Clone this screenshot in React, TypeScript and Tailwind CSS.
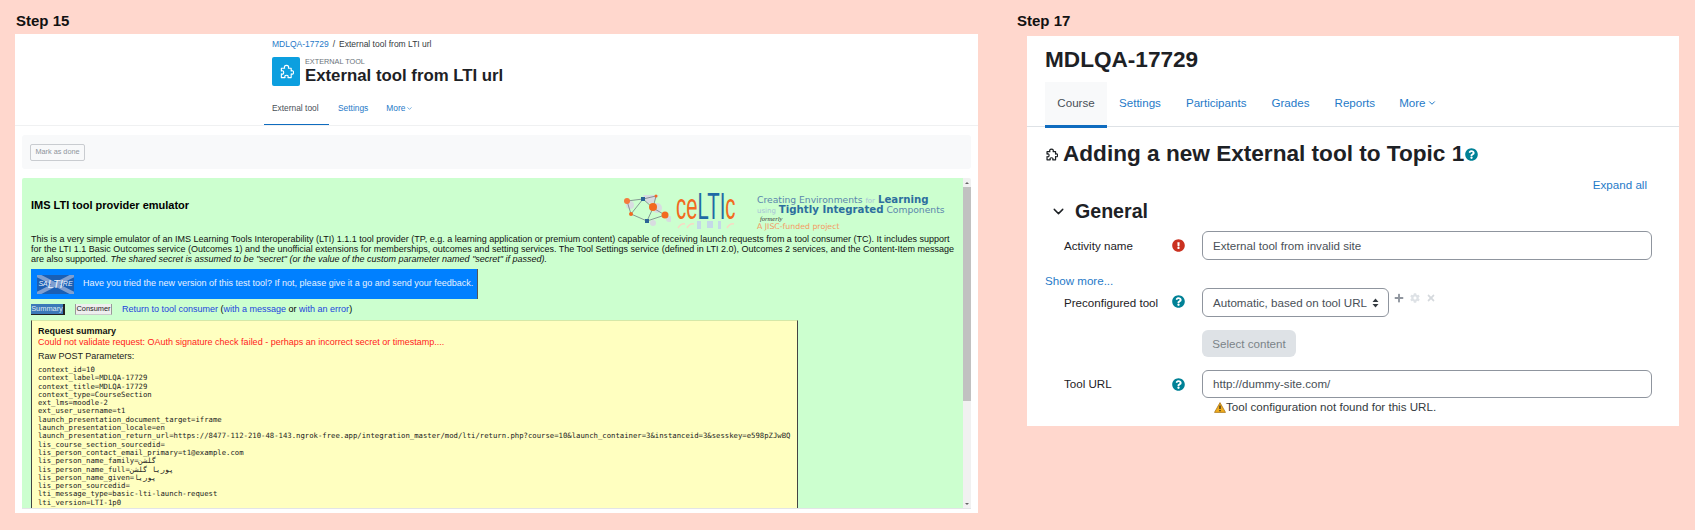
import { ChevronDown } from "lucide-react";
import { FaCog, FaExclamationCircle, FaPlus, FaQuestionCircle, FaTimes } from "react-icons/fa";

const sans = { fontFamily: '"Liberation Sans", Arial, sans-serif' };

const rawParams = [
  "context_id=10",
  "context_label=MDLQA-17729",
  "context_title=MDLQA-17729",
  "context_type=CourseSection",
  "ext_lms=moodle-2",
  "ext_user_username=t1",
  "launch_presentation_document_target=iframe",
  "launch_presentation_locale=en",
  "launch_presentation_return_url=https://8477-112-210-48-143.ngrok-free.app/integration_master/mod/lti/return.php?course=10&launch_container=3&instanceid=3&sesskey=e598pZJwBQ",
  "lis_course_section_sourcedid=",
  "lis_person_contact_email_primary=t1@example.com",
  "lis_person_name_family=گلشن",
  "lis_person_name_full=پوریا گلشن",
  "lis_person_name_given=پوریا",
  "lis_person_sourcedid=",
  "lti_message_type=basic-lti-launch-request",
  "lti_version=LTI-1p0",
];

// moodle's outlined puzzle piece
function PuzzleIcon({ size, color, width }: { size: number; color: string; width: number }) {
  return (
    <svg width={size} height={size} viewBox="0 0 16 16" fill="none" stroke={color} strokeWidth={width} strokeLinejoin="round" className="shrink-0">
      <path d="M2.5 4.5 H6 Q5 1.5 8 1.5 Q11 1.5 10 4.5 H13 V7.5 Q15.5 6.5 15.5 9 Q15.5 11.5 13 10.5 V14.5 H9.5 Q10.5 12 8 12 Q5.5 12 6.5 14.5 H2.5 V10.5 Q5 11.5 5 9 Q5 6.5 2.5 7.5 Z" />
    </svg>
  );
}

function CelticLogo() {
  return (
    <div className="flex items-start shrink-0 mt-[15px]">
      <svg width="48" height="34" viewBox="0 0 48 34" className="shrink-0">
        <g fill="#d8dce0">
          <circle cx="7" cy="12" r="4" />
          <circle cx="34" cy="15" r="5" />
          <circle cx="46" cy="26" r="3" />
          <circle cx="30" cy="30" r="3" />
          <path d="M20 2 H36 L30 10 H24 Z" />
        </g>
        <g stroke="#666f78" strokeWidth="0.7" fill="none">
          <path d="M4 8 L20 6 L30 15 L42 22 L24 28 L8 21 Z" />
          <path d="M20 6 L8 21 M30 15 L24 28 M20 6 L33 3 L30 15" />
        </g>
        <circle cx="4" cy="8" r="3" fill="#f47b3c" />
        <circle cx="30" cy="14" r="4" fill="#f26a21" />
        <circle cx="42" cy="22" r="3.5" fill="#f26a21" />
        <circle cx="8" cy="21" r="2" fill="#f26a21" />
        <rect x="18" y="4" width="4" height="4" fill="#2a6496" />
        <rect x="22" y="26" width="4" height="4" fill="#2a6496" />
        <circle cx="33" cy="3" r="1.5" fill="#f26a21" />
      </svg>
      <div className="ml-[5px] w-[61px]">
        <div className="h-[28px] text-[36px] leading-[28px] whitespace-nowrap scale-x-[0.565] origin-left">
          <span className="text-[#f26a21]">ce</span>
          <span className="text-[#1f6aa5]">LTI</span>
          <span className="text-[#f26a21]">c</span>
        </div>
        <svg width="61" height="9" viewBox="0 0 61 9">
          <path d="M2 7 Q5 2 9 3 M11 7 Q14 2 18 3 M51 7 Q54 2 58 3" stroke="#f8d9c4" strokeWidth="1.5" fill="none" />
          <path d="M21 0 H25 V8 H21 Z M31 0 H37 V7 H31 Z M42 0 H45 V8 H42 Z" fill="#c4d8e8" />
        </svg>
      </div>
    </div>
  );
}

function LeftPanel() {
  return (
    <div className="flex flex-col w-[963px] h-[479px] bg-white overflow-hidden">
      <div className="pl-[249px] pt-[4px]">
        <div className="pl-[8px] h-[12px] text-[8.5px] leading-[12px] text-[#343a40] whitespace-nowrap">
          <span className="text-[#1f7ac8]">MDLQA-17729</span>
          <span className="mx-[4px]">/</span>
          <span>External tool from LTI url</span>
        </div>
        <div className="flex items-center pl-[8px] mt-[6px]">
          <div className="flex items-center justify-center w-[28px] h-[29px] rounded-[2px] bg-[#0c9fdf]">
            <PuzzleIcon size={15} color="#ffffff" width={1.2} />
          </div>
          <div className="ml-[5px] pt-px">
            <div className="text-[7.3px] leading-[9px] text-[#6a737b]">EXTERNAL TOOL</div>
            <div className="text-[16.8px] leading-[20px] font-bold text-[#1d2125] whitespace-nowrap">External tool from LTI url</div>
          </div>
        </div>
        <div className="flex mt-[9px] h-[31px] text-[8.4px] whitespace-nowrap w-fit">
          <div className="flex items-center w-[65px] pl-[8px] pb-[3px] h-[31px] border-b-[2px] border-[#0f6cbf] text-[#495057]">External tool</div>
          <div className="flex items-center ml-[9px] pb-[4px] text-[#1f7ac8]">Settings</div>
          <div className="flex items-center ml-[18px] pb-[4px] text-[#1f7ac8]">
            More
            <ChevronDown size={7} className="ml-[1px]" />
          </div>
        </div>
      </div>
      <div className="h-px bg-[#f0f1f2] -mt-px" />
      <div className="mx-[7px] mt-[9px] h-[34px] flex items-center px-[8px] rounded-[3px] bg-[#f8f9fa]">
        <div className="flex items-center justify-center w-[55px] h-[17px] border border-[#c9ccd0] rounded-[2px] text-[7.3px] text-[#8f959b] whitespace-nowrap">Mark as done</div>
      </div>
      <div className="mx-[7px] mt-[9px] h-[331px] flex overflow-hidden rounded-t-[2px] border-b border-[#e3e5e7]">
        <div className="flex-1 min-w-0 bg-[#ccffcf] overflow-hidden text-black">
          <div className="flex justify-between h-[56px] pl-[9px]">
            <div className="mt-[20px] text-[11px] leading-[14px] font-bold whitespace-nowrap">IMS LTI tool provider emulator</div>
            <div className="flex w-[325px] mr-[15px]">
              <CelticLogo />
              <div className="ml-[20px] mt-[17px] whitespace-nowrap text-[#5b86ad]" style={{ fontFamily: '"DejaVu Sans", sans-serif' }}>
                <div className="h-[10px] text-[9.2px] leading-[10px]">
                  Creating Environments <span className="text-[7px] text-[#a8c4d8]">for</span>{" "}
                  <span className="font-bold text-[10.2px] text-[#2c6e9e]">Learning</span>
                </div>
                <div className="h-[10px] text-[9.2px] leading-[10px]">
                  <span className="text-[7px] text-[#a8c4d8]">using</span>{" "}
                  <span className="font-bold text-[10.2px] text-[#2c6e9e]">Tightly Integrated</span> Components
                </div>
                <div className="pl-[3px] h-[7px] text-[6.5px] italic leading-[7px] text-[#333]" style={{ fontFamily: '"Liberation Serif", serif' }}>formerly</div>
                <div className="text-[7.8px] leading-[10px] text-[#f59a62]">A JISC-funded project</div>
              </div>
            </div>
          </div>
          <div className="pl-[9px] text-[9px] leading-[10px] whitespace-nowrap text-[#111]">
            This is a very simple emulator of an IMS Learning Tools Interoperability (LTI) 1.1.1 tool provider (TP, e.g. a learning application or premium content) capable of receiving launch requests from a tool consumer (TC). It includes support
            <br />
            for the LTI 1.1 Basic Outcomes service (Outcomes 1) and the unofficial extensions for memberships, outcomes and setting services. The Tool Settings service (defined in LTI 2.0), Outcomes 2 services, and the Content-Item message
            <br />
            are also supported. <em>The shared secret is assumed to be "secret" (or the value of the custom parameter named "secret" if passed).</em>
          </div>
          <div className="flex items-center ml-[9px] mt-[5px] w-[447px] h-[30px] pl-[6px] bg-[#0080ff] border-r border-[#555]">
            <div className="relative shrink-0 w-[37px] h-[19px]">
              <svg width="37" height="19" viewBox="0 0 37 19">
                <rect width="37" height="19" fill="#1a5fb4" />
                <path d="M0 0 L37 19 M37 0 L0 19" stroke="#7f9fd0" strokeWidth="4" />
              </svg>
              <span className="absolute inset-0 flex items-center justify-center italic text-[#e9f1fb] whitespace-nowrap">
                <span className="text-[7px]">SA</span>
                <span className="text-[11px]">LTI</span>
                <span className="text-[7px]">RE</span>
              </span>
            </div>
            <span className="ml-[9px] text-[9px] text-[#e8f2ff] whitespace-nowrap">Have you tried the new version of this test tool? If not, please give it a go and send your feedback.</span>
          </div>
          <div className="flex items-center ml-[9px] mt-[5px] h-[11px] text-[9px] whitespace-nowrap">
            <div className="flex items-center justify-center w-[34px] h-[11px] bg-[#3b78b8] border-r-2 border-b border-[#222] text-[7.4px] text-[#dfe9f4]">Summary</div>
            <div className="flex items-center justify-center ml-[10px] w-[37px] h-[11px] bg-[#eeeeee] border-x border-b border-x-[#999] border-b-[#ccc] text-[7.4px] text-[#222]">Consumer</div>
            <div className="ml-[10px]">
              <span className="text-[#2244dd]">Return to tool consumer</span> (<span className="text-[#2244dd]">with a message</span> or <span className="text-[#2244dd]">with an error</span>)
            </div>
          </div>
          <div className="ml-[9px] mt-[5px] w-[767px] h-[300px] bg-[#ffffc0] border-x border-[#444] border-t border-t-[#d5e8a8] pl-[6px] pt-[5px]">
            <div className="text-[9px] leading-[11px] font-bold text-[#111]">Request summary</div>
            <div className="text-[9px] leading-[11px] text-[#ff1a1a] whitespace-nowrap">Could not validate request: OAuth signature check failed - perhaps an incorrect secret or timestamp....</div>
            <div className="mt-[3px] text-[9px] leading-[11px] text-[#222]">Raw POST Parameters:</div>
            <div className="mt-[4px] text-[7.28px] leading-[8.3px] text-[#222] whitespace-nowrap" style={{ fontFamily: '"DejaVu Sans Mono", monospace' }}>
              {rawParams.map((line) => (
                <div key={line} className="h-[8.3px]">{line}</div>
              ))}
            </div>
          </div>
        </div>
        <div className="flex flex-col shrink-0 w-[8px] bg-[#f1f1f1]">
          <div className="flex items-center justify-center h-[9px]">
            <div className="w-0 h-0 border-x-[2px] border-x-transparent border-b-[2px] border-b-[#666]" />
          </div>
          <div className="h-[214px] bg-[#c1c1c1]" />
          <div className="flex-1" />
          <div className="flex items-center justify-center h-[9px]">
            <div className="w-0 h-0 border-x-[2px] border-x-transparent border-t-[2px] border-t-[#666]" />
          </div>
        </div>
      </div>
    </div>
  );
}

function RightPanel() {
  const helpIcon = <FaQuestionCircle size={13} color="#008196" />;
  return (
    <div className="w-[652px] h-[390px] bg-white text-[#1d2125] overflow-hidden">
      <div className="pl-[18px] pt-[8px] text-[22.6px] leading-[32px] font-bold whitespace-nowrap">MDLQA-17729</div>
      <div className="flex pl-[18px] mt-[6px] h-[45px] border-b border-[#dee2e6] text-[11.6px] whitespace-nowrap">
        <div className="flex items-center justify-center w-[62px] h-[46px] pb-[2px] bg-[#f8f9fa] border-b-[3px] border-[#0f6cbf] text-[#495057]">Course</div>
        <div className="flex items-center ml-[12px] pb-[2px] text-[#1f7ac8]">Settings</div>
        <div className="flex items-center ml-[25px] pb-[2px] text-[#1f7ac8]">Participants</div>
        <div className="flex items-center ml-[25px] pb-[2px] text-[#1f7ac8]">Grades</div>
        <div className="flex items-center ml-[25px] pb-[2px] text-[#1f7ac8]">Reports</div>
        <div className="flex items-center ml-[24px] pb-[2px] text-[#1f7ac8]">
          More
          <ChevronDown size={10} className="ml-[1px]" strokeWidth={2.4} />
        </div>
      </div>
      <div className="flex items-center pl-[18px] mt-[12px] h-[30px]">
        <PuzzleIcon size={13} color="#1d2125" width={1.5} />
        <span className="ml-[5px] text-[22.6px] leading-[30px] font-bold whitespace-nowrap">Adding a new External tool to Topic 1</span>
        <span className="ml-[1px]">{helpIcon}</span>
      </div>
      <div className="flex justify-end pr-[32px] mt-[8px] text-[11.6px] leading-[16px] text-[#1f7ac8]">Expand all</div>
      <div className="flex items-center pl-[23px] mt-[6px] h-[24px]">
        <ChevronDown size={17} strokeWidth={2} />
        <span className="ml-[8px] text-[19.6px] leading-[24px] font-bold">General</span>
      </div>
      <div className="flex items-center pl-[37px] mt-[8px] h-[29px] text-[11.6px]">
        <span className="w-[108px]">Activity name</span>
        <span className="w-[30px]"><FaExclamationCircle size={13} color="#ca3120" /></span>
        <div className="flex items-center w-[450px] h-[29px] pl-[10px] border border-[#8f959e] rounded-[6px] text-[#495057]">External tool from invalid site</div>
      </div>
      <div className="pl-[18px] mt-[13px] text-[11.6px] leading-[16px] text-[#1f7ac8]">Show more...</div>
      <div className="flex items-start pl-[37px] -mt-[1px] h-[29px] text-[11.6px]">
        <span className="w-[108px] mt-[6px]">Preconfigured tool</span>
        <span className="w-[30px] mt-[7px]">{helpIcon}</span>
        <div className="flex items-center justify-between w-[187px] h-[29px] pl-[10px] pr-[9px] border border-[#8f959e] rounded-[6px] text-[#495057] whitespace-nowrap">
          Automatic, based on tool URL
          <svg width="7" height="10" viewBox="0 0 7 10" fill="#343a40" className="shrink-0"><path d="M3.5 0.5 L6.5 4 H0.5 Z M3.5 9.5 L0.5 6 H6.5 Z" /></svg>
        </div>
        <div className="flex items-center ml-[5px] mt-[5px] gap-[6px]">
          <FaPlus size={10} color="#8f959e" />
          <FaCog size={10} color="#dee2e6" />
          <FaTimes size={10} color="#d5d9dd" />
        </div>
      </div>
      <div className="ml-[175px] mt-[13px] flex items-center justify-center w-[94px] h-[27px] rounded-[6px] bg-[#dee2e6] text-[11.6px] text-[#7b8288]">Select content</div>
      <div className="flex items-center pl-[37px] mt-[13px] h-[28px] text-[11.6px]">
        <span className="w-[108px]">Tool URL</span>
        <span className="w-[30px]">{helpIcon}</span>
        <div className="flex items-center w-[450px] h-[28px] pl-[10px] border border-[#8f959e] rounded-[6px] text-[#495057]">http://dummy-site.com/</div>
      </div>
      <div className="flex items-center ml-[187px] mt-[1px] h-[16px] text-[11.6px] text-[#343a40] whitespace-nowrap">
        <svg width="12" height="11" viewBox="0 0 12 11" className="shrink-0"><path d="M6 0.6 L11.5 10.4 H0.5 Z" fill="#f0ad1e" stroke="#a06a10" strokeWidth="0.7" /><path d="M6 3.5 V7 M6 8 V9.2" stroke="#222" strokeWidth="1.2" /></svg>
        Tool configuration not found for this URL.
      </div>
    </div>
  );
}

export default function App() {
  return (
    <div className="flex w-[1695px] h-[530px] bg-[#ffd7cd] overflow-hidden" style={sans}>
      <div className="ml-[15px]">
        <div className="h-[34px] pl-px pt-[12px] text-[15px] leading-[18px] font-bold text-[#111]">Step 15</div>
        <LeftPanel />
      </div>
      <div className="ml-[39px]">
        <div className="h-[36px] pt-[12px] text-[15px] leading-[18px] font-bold text-[#111]">Step 17</div>
        <div className="ml-[10px]">
          <RightPanel />
        </div>
      </div>
    </div>
  );
}
